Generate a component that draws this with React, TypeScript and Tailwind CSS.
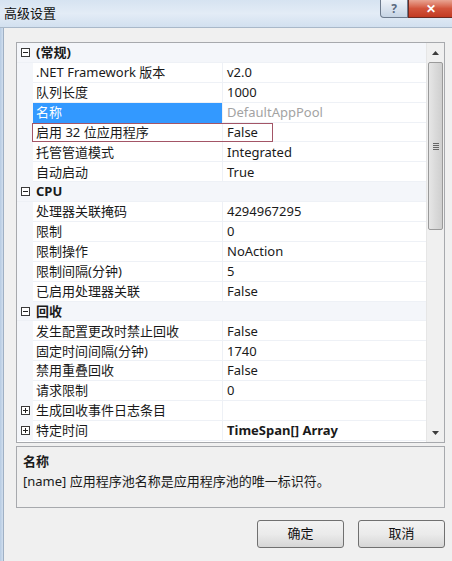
import React from "react";

type Row =
  | { kind: "cat"; label: string }
  | { kind: "item"; name: string; value: string; expand?: boolean; selected?: boolean; dim?: boolean; boldValue?: boolean; marked?: boolean };

const rows: Row[] = [
  { kind: "cat", label: "(常规)" },
  { kind: "item", name: ".NET Framework 版本", value: "v2.0" },
  { kind: "item", name: "队列长度", value: "1000" },
  { kind: "item", name: "名称", value: "DefaultAppPool", selected: true, dim: true },
  { kind: "item", name: "启用 32 位应用程序", value: "False", marked: true },
  { kind: "item", name: "托管管道模式", value: "Integrated" },
  { kind: "item", name: "自动启动", value: "True" },
  { kind: "cat", label: "CPU" },
  { kind: "item", name: "处理器关联掩码", value: "4294967295" },
  { kind: "item", name: "限制", value: "0" },
  { kind: "item", name: "限制操作", value: "NoAction" },
  { kind: "item", name: "限制间隔(分钟)", value: "5" },
  { kind: "item", name: "已启用处理器关联", value: "False" },
  { kind: "cat", label: "回收" },
  { kind: "item", name: "发生配置更改时禁止回收", value: "False" },
  { kind: "item", name: "固定时间间隔(分钟)", value: "1740" },
  { kind: "item", name: "禁用重叠回收", value: "False" },
  { kind: "item", name: "请求限制", value: "0" },
  { kind: "item", name: "生成回收事件日志条目", value: "", expand: true },
  { kind: "item", name: "特定时间", value: "TimeSpan[] Array", expand: true, boldValue: true },
];

function Box({ plus }: { plus?: boolean }) {
  return (
    <span className="relative block w-[9px] h-[9px] border border-[#3a3a3a] bg-white">
      <span className="absolute left-[1px] top-[3px] w-[5px] h-[1px] bg-[#222]" />
      {plus && <span className="absolute left-[3px] top-[1px] w-[1px] h-[5px] bg-[#222]" />}
    </span>
  );
}

function GridRow({ row }: { row: Row }) {
  if (row.kind === "cat") {
    return (
      <div className="flex h-[19.9px] items-center bg-[#f4f6fa] border-b border-[#eef1f6]">
        <div className="w-[16px] flex justify-center pl-[1px]">
          <Box />
        </div>
        <span className="pl-[3px] pt-[1px] font-bold text-[#1a1a1a]">{row.label}</span>
      </div>
    );
  }
  return (
    <div className="relative flex h-[19.9px] items-stretch">
      <div className="w-[16px] shrink-0 flex items-center justify-center pl-[1px] bg-[#f4f6fa]">
        {row.expand && <Box plus />}
      </div>
      <div
        className={`w-[189px] shrink-0 flex items-center pl-[3px] pt-[1px] border-b whitespace-nowrap ${
          row.selected ? "bg-[#3399ff] text-white border-[#3399ff]" : "text-[#1a1a1a] border-[#eef1f6]"
        }`}
      >
        {row.name}
      </div>
      <div className="w-[1px] bg-[#eef1f6]" />
      <div
        className={`flex-1 flex items-center pl-[4px] pt-[1px] border-b border-[#eef1f6] whitespace-nowrap ${
          row.dim ? "text-[#a3a3a3]" : "text-[#1a1a1a]"
        } ${row.boldValue ? "font-bold" : ""}`}
      >
        {row.value}
      </div>
      {row.marked && (
        <div className="absolute left-[15px] top-0 w-[241px] h-full border border-[#a35566]" />
      )}
    </div>
  );
}

function Scrollbar() {
  return (
    <div className="w-[18px] shrink-0 flex flex-col bg-[#f0f0f0] border-l border-[#e6e6e6]">
      <div className="h-[19px] flex items-center justify-center">
        <svg width="7" height="4" viewBox="0 0 7 4">
          <path d="M0 4 L3.5 0 L7 4 Z" fill="#3c3c3c" />
        </svg>
      </div>
      <div className="mx-[1px] h-[168px] rounded-[2px] border border-[#9a9a9a] bg-gradient-to-r from-[#e6e6e6] via-[#dadada] to-[#cfcfcf] flex items-center justify-center">
        <div className="flex flex-col gap-[1px]">
          <span className="block w-[6px] h-[1px] bg-[#666]" />
          <span className="block w-[6px] h-[1px] bg-[#666]" />
          <span className="block w-[6px] h-[1px] bg-[#666]" />
          <span className="block w-[6px] h-[1px] bg-[#666]" />
        </div>
      </div>
      <div className="flex-1" />
      <div className="h-[19px] flex items-center justify-center">
        <svg width="7" height="4" viewBox="0 0 7 4">
          <path d="M0 0 L3.5 4 L7 0 Z" fill="#3c3c3c" />
        </svg>
      </div>
    </div>
  );
}

export default function App() {
  return (
    <div
      className="w-[452px] h-[561px] overflow-hidden flex flex-col bg-[#f0f0f0] text-[13px]"
      style={{ fontFamily: '"Noto Sans", "Noto Sans CJK SC", sans-serif' }}
    >
      <div className="h-[28px] shrink-0 flex items-start justify-between bg-gradient-to-b from-[#d6e3f1] via-[#e3ecf6] to-[#d2e0ef] border-b border-[#a9b8c9]">
        <span className="pl-[4px] pt-[5px] text-[13px] leading-[16px] text-[#111]">高级设置</span>
        <div className="flex">
          <div className="w-[28px] h-[18px] rounded-bl-[4px] border border-t-0 border-[#6d7b8d] bg-gradient-to-b from-[#eef3f9] to-[#c6d4e4] flex items-center justify-center text-[12px] leading-none font-bold text-[#5a6a80]">
            ?
          </div>
          <div className="w-[44px] h-[18px] border border-t-0 border-r-0 border-[#6b2a22] bg-gradient-to-b from-[#e8a493] via-[#d2543c] to-[#c23a22] flex items-center justify-center text-white text-[12px] leading-none font-bold">
            ✕
          </div>
        </div>
      </div>
      <div className="flex-1 flex">
        <div className="w-[3px] bg-gradient-to-r from-[#b7cbe2] to-[#d0deee]" />
        <div className="w-[1px] bg-[#9fb0c4]" />
        <div className="flex-1 flex flex-col pl-[12px] pr-[7px] pt-[14px]">
          <div className="h-[401px] flex border border-[#a7a9ad] bg-white">
            <div className="flex-1 overflow-hidden">
              {rows.map((r, i) => (
                <GridRow key={i} row={r} />
              ))}
            </div>
            <Scrollbar />
          </div>
          <div className="mt-[3px] h-[62px] border border-[#a7a9ad] bg-[#f0f0f0] px-[6px] pt-[4px] leading-[20px] text-[#1a1a1a]">
            <div className="font-bold">名称</div>
            <div>[name] 应用程序池名称是应用程序池的唯一标识符。</div>
          </div>
          <div className="mt-[12px] flex justify-end gap-[14px]">
            <button className="w-[87px] h-[28px] rounded-[3px] border border-[#707070] bg-gradient-to-b from-[#f2f2f2] via-[#ebebeb] to-[#d6d6d6] text-[13px] text-[#111]">
              确定
            </button>
            <button className="w-[87px] h-[28px] rounded-[3px] border border-[#707070] bg-gradient-to-b from-[#f2f2f2] via-[#ebebeb] to-[#d6d6d6] text-[13px] text-[#111]">
              取消
            </button>
          </div>
        </div>
      </div>
    </div>
  );
}
